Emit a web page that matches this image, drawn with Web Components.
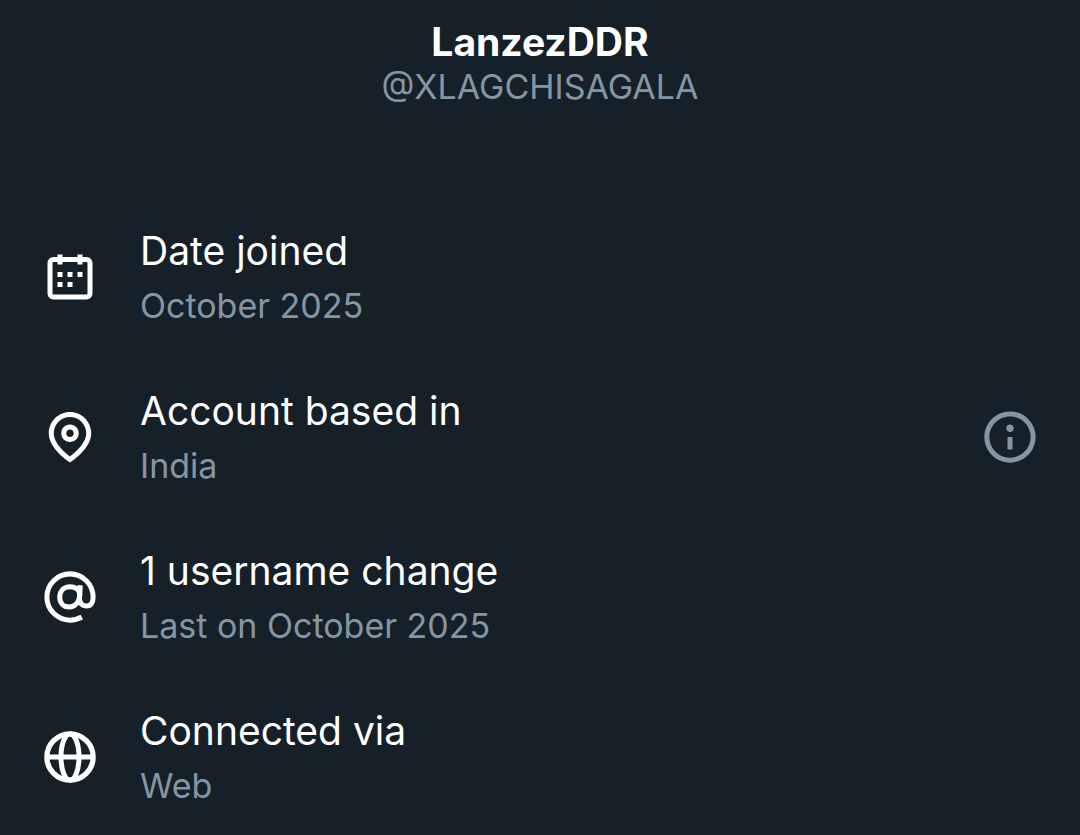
<!DOCTYPE html>
<html lang="en">
<head>
<meta charset="utf-8">
<meta name="viewport" content="width=device-width, initial-scale=1">
<title>About this account</title>
<style>
  html { background: #162029; }
  body { margin: 0; font-family: Inter, "Liberation Sans", sans-serif; color: #fff; }
</style>
</head>
<body>
<about-account>
  <account-header slot="header"><span slot="name">LanzezDDR</span><span slot="handle">@XLAGCHISAGALA</span></account-header>
  <account-fact icon="calendar"><span slot="title">Date joined</span><span slot="detail">October 2025</span></account-fact>
  <account-fact icon="pin" info><span slot="title">Account based in</span><span slot="detail">India</span></account-fact>
  <account-fact icon="at"><span slot="title">1 username change</span><span slot="detail">Last on October 2025</span></account-fact>
  <account-fact icon="globe"><span slot="title">Connected via</span><span slot="detail">Web</span></account-fact>
</about-account>
<script>
const ICONS = {
  calendar: '<path d="M7 4V3h2v1h6V3h2v1h1.5C19.89 4 21 5.12 21 6.5v12c0 1.38-1.11 2.5-2.5 2.5h-13C4.12 21 3 19.88 3 18.5v-12C3 5.12 4.12 4 5.5 4H7zm0 2H5.5c-.27 0-.5.22-.5.5v12c0 .28.23.5.5.5h13c.28 0 .5-.22.5-.5v-12c0-.28-.22-.5-.5-.5H17v1h-2V6H9v1H7V6zm0 6h2v-2H7v2zm0 4h2v-2H7v2zm4-4h2v-2h-2v2zm0 4h2v-2h-2v2zm4-4h2v-2h-2v2z"/>',
  pin: '<path d="M12 7c-1.93 0-3.5 1.57-3.5 3.5S10.07 14 12 14s3.5-1.57 3.5-3.5S13.93 7 12 7zm0 5c-.827 0-1.5-.673-1.5-1.5S11.173 9 12 9s1.5.673 1.5 1.5S12.827 12 12 12zm0-10c-4.687 0-8.5 3.813-8.5 8.5 0 5.967 7.621 11.116 7.945 11.332l.555.37.555-.37c.324-.216 7.945-5.365 7.945-11.332C20.5 5.813 16.687 2 12 2zm0 17.77c-1.665-1.241-6.5-5.196-6.5-9.27C5.5 6.916 8.416 4 12 4s6.5 2.916 6.5 6.5c0 4.073-4.835 8.028-6.5 9.27z"/>',
  at: '<g fill="none" stroke="currentColor" stroke-width="2"><path d="M16.700 20C15.300 20.800 13.700 21.250 12 21.250A9.250 9.250 0 1 1 21.250 12C21.250 14.400 20.200 15.600 18.700 15.600C16.800 15.600 15.700 14.400 15.800 12.400L16.100 7.300"/><path d="M15.900 11.300C15.700 14.200 14 16 11.600 16C9.400 16 7.900 14.400 7.900 12.100C7.900 9.600 9.500 7.900 12 7.900C14.400 7.900 16 9.300 15.900 11.300Z"/></g>',
  globe: '<g fill="none" stroke="currentColor" stroke-width="2"><circle cx="12" cy="12" r="9.250" stroke-width="2.100"/><ellipse cx="12" cy="12" rx="3.600" ry="9.250"/><path d="M2.750 12h18.500"/></g>',
  info: '<path d="M13.500 8.500c0 .83-.67 1.500-1.500 1.500s-1.500-.67-1.500-1.500S11.170 7 12 7s1.500.67 1.500 1.500zM13 17v-5h-2v5h2zm-1 5.250c5.660 0 10.250-4.590 10.250-10.250S17.660 1.750 12 1.750 1.750 6.340 1.750 12 6.340 22.250 12 22.250zM20.250 12c0 4.560-3.690 8.250-8.250 8.250S3.750 16.560 3.750 12 7.440 3.750 12 3.750s8.250 3.690 8.250 8.250z"/>'
};
const icon = name => `<svg viewBox="0 0 24 24" fill="currentColor" aria-hidden="true">${ICONS[name]}</svg>`;

customElements.define('account-header', class extends HTMLElement {
  constructor() {
    super();
    this.attachShadow({ mode: 'open' }).innerHTML = `
      <style>
        :host { display: block; text-align: center; }
        h1, p { margin: 0; }
        h1 { font-size: 39px; line-height: 44px; font-weight: 700; }
        p { font-size: 34px; line-height: 46px; color: #8596a3; }
      </style>
      <h1><slot name="name"></slot></h1>
      <p><slot name="handle"></slot></p>`;
  }
});

customElements.define('account-fact', class extends HTMLElement {
  constructor() {
    super();
    this.attachShadow({ mode: 'open' }).innerHTML = `
      <style>
        :host { display: flex; align-items: center; gap: 40px; }
        svg { display: block; flex: none; width: 60px; height: 60px; }
        .text { flex: 1; min-width: 0; }
        h2, p { margin: 0; }
        h2 { font-size: 39px; line-height: 58px; font-weight: 400; }
        p { font-size: 34px; line-height: 52px; color: #8596a3; }
        button { flex: none; padding: 0; border: 0; background: none; color: #8596a3; cursor: pointer; }
      </style>
      ${icon(this.getAttribute('icon'))}
      <div class="text">
        <h2><slot name="title"></slot></h2>
        <p><slot name="detail"></slot></p>
      </div>
      ${this.hasAttribute('info') ? `<button type="button" aria-label="More information">${icon('info')}</button>` : ''}`;
  }
});

customElements.define('about-account', class extends HTMLElement {
  constructor() {
    super();
    this.attachShadow({ mode: 'open' }).innerHTML = `
      <style>
        :host { display: block; padding: 20px 40px 0; }
        .facts { display: flex; flex-direction: column; gap: 50px; margin-top: 112px; }
      </style>
      <header><slot name="header"></slot></header>
      <main class="facts"><slot></slot></main>`;
  }
});
</script>
</body>
</html>
